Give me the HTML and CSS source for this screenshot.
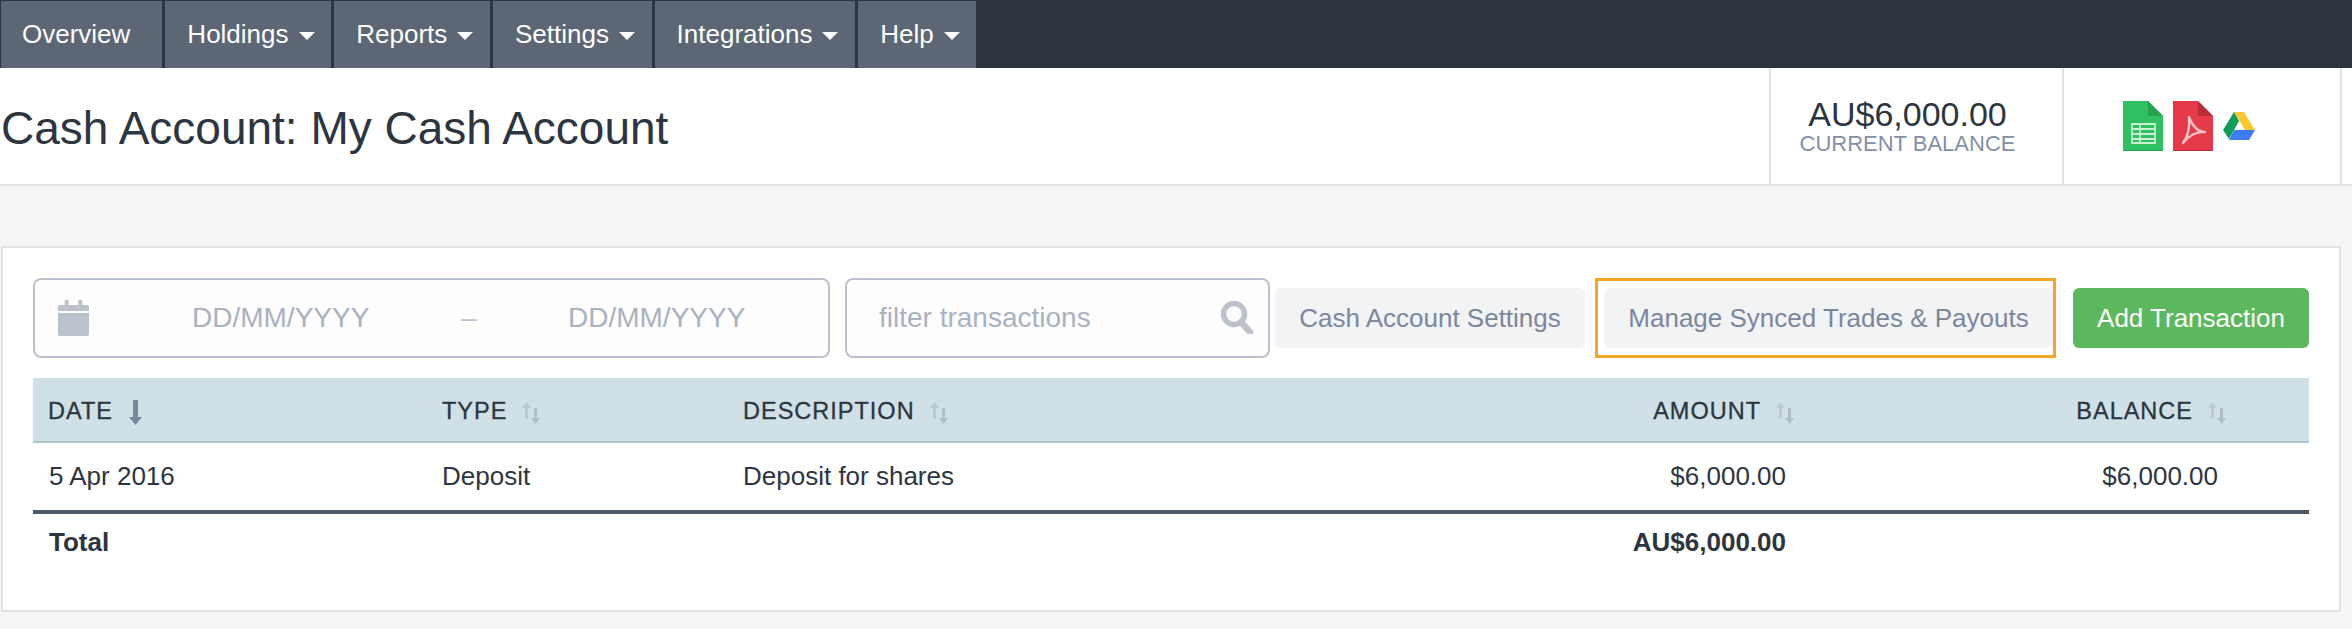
FILE: index.html
```html
<!DOCTYPE html>
<html lang="en">
<head>
<meta charset="utf-8">
<title>Cash Account</title>
<link rel="stylesheet" href="styles.css">
</head>
<body>
<nav class="nav">
  <a class="nav-item">Overview</a>
  <a class="nav-item">Holdings<i class="caret"></i></a>
  <a class="nav-item">Reports<i class="caret"></i></a>
  <a class="nav-item">Settings<i class="caret"></i></a>
  <a class="nav-item">Integrations<i class="caret"></i></a>
  <a class="nav-item">Help<i class="caret"></i></a>
</nav>
<header class="head">
  <h1 class="title">Cash Account: My Cash Account</h1>
  <div class="stat">
    <div class="stat-value">AU$6,000.00</div>
    <div class="stat-label">CURRENT BALANCE</div>
  </div>
  <div class="exports">
    <svg class="file" width="40" height="50" viewBox="0 0 40 50">
      <path d="M0 0H25L40 15V50H0Z" fill="#2fc061"/>
      <path d="M25 0L40 15H25Z" fill="#25a14f"/>
      <path d="M0 49H40V50H0Z" fill="#25a14f"/>
      <path d="M9 23H32V42H9ZM9 28H32M9 33H32M9 38H32M17 23V42" fill="none" stroke="#c8f0d5" stroke-width="1.8"/>
    </svg>
    <svg class="file" width="40" height="50" viewBox="0 0 40 50">
      <path d="M0 0H25L40 15V50H0Z" fill="#e63a4a"/>
      <path d="M25 0L40 15H25Z" fill="#b92c3a"/>
      <path d="M0 49H40V50H0Z" fill="#b92c3a"/>
      <path d="M16 16C17 25 15 35 10 42C15 35 24 30 32 31C26 31 20 26 16 16Z" fill="none" stroke="#f6c6cb" stroke-width="2.4" stroke-linejoin="round"/>
    </svg>
    <svg class="drive" width="32" height="28" viewBox="0 0 32 28">
      <path d="M11 0H21L32 18H22Z" fill="#fbc92f"/>
      <path d="M11 0L16 9L6 27L0 18Z" fill="#109d58"/>
      <path d="M11 18H32L26 28H6Z" fill="#3d7cf0"/>
    </svg>
  </div>
  <div class="head-end"></div>
</header>
<main class="panel">
  <div class="toolbar">
    <div class="field date-field">
      <svg class="cal" width="31" height="36" viewBox="0 0 32 36" preserveAspectRatio="none">
        <path d="M7 0H11V6H7ZM21 0H25V6H21Z" fill="#bcc2cd"/>
        <path d="M2 5H30A2 2 0 0 1 32 7V11H0V7A2 2 0 0 1 2 5ZM0 13H32V34A2 2 0 0 1 30 36H2A2 2 0 0 1 0 34Z" fill="#bcc2cd"/>
      </svg>
      <span class="date-text">DD/MM/YYYY</span>
      <span class="dash">–</span>
      <span class="date-text">DD/MM/YYYY</span>
    </div>
    <div class="field search-field">
      <span class="search-text">filter transactions</span>
      <svg class="search-icon" width="34" height="34" viewBox="0 0 34 34">
        <circle cx="14" cy="14" r="10.5" fill="none" stroke="#bcc2cd" stroke-width="5.5"/>
        <path d="M21 22L30 32" stroke="#bcc2cd" stroke-width="6.5" stroke-linecap="round"/>
      </svg>
    </div>
    <button class="btn btn-plain">Cash Account Settings</button>
    <div class="highlight"><button class="btn btn-plain">Manage Synced Trades &amp; Payouts</button></div>
    <button class="btn btn-add">Add Transaction</button>
  </div>
  <table class="ledger">
    <colgroup>
      <col class="c-date"><col class="c-type"><col class="c-desc"><col class="c-amt"><col class="c-bal">
    </colgroup>
    <thead>
      <tr>
        <th>DATE<svg class="sort-on" width="13" height="25" viewBox="0 0 13 25"><path d="M4 0H9V17H13L6.500 25L0 17H4Z" fill="#7b869a"/></svg></th>
        <th>TYPE<svg class="sort" width="18" height="22" viewBox="0 0 18 22"><path d="M4.500 0L9 6H6V16H3V6H0Z" fill="#bfc7d0"/><path d="M13.500 22L9 16H12V6H15V16H18Z" fill="#b4bcc8"/></svg></th>
        <th>DESCRIPTION<svg class="sort" width="18" height="22" viewBox="0 0 18 22"><path d="M4.500 0L9 6H6V16H3V6H0Z" fill="#bfc7d0"/><path d="M13.500 22L9 16H12V6H15V16H18Z" fill="#b4bcc8"/></svg></th>
        <th class="num">AMOUNT<svg class="sort" width="18" height="22" viewBox="0 0 18 22"><path d="M4.500 0L9 6H6V16H3V6H0Z" fill="#bfc7d0"/><path d="M13.500 22L9 16H12V6H15V16H18Z" fill="#b4bcc8"/></svg></th>
        <th class="num last">BALANCE<svg class="sort" width="18" height="22" viewBox="0 0 18 22"><path d="M4.500 0L9 6H6V16H3V6H0Z" fill="#bfc7d0"/><path d="M13.500 22L9 16H12V6H15V16H18Z" fill="#b4bcc8"/></svg></th>
      </tr>
    </thead>
    <tbody>
      <tr>
        <td>5 Apr 2016</td>
        <td>Deposit</td>
        <td>Deposit for shares</td>
        <td class="num">$6,000.00</td>
        <td class="num last">$6,000.00</td>
      </tr>
    </tbody>
    <tfoot>
      <tr>
        <td>Total</td>
        <td></td>
        <td></td>
        <td class="num">AU$6,000.00</td>
        <td class="last"></td>
      </tr>
    </tfoot>
  </table>
</main>
</body>
</html>
```
FILE: styles.css
```css
* { box-sizing: border-box; }
html, body { margin: 0; padding: 0; }
body {
  background: #f5f5f5;
  color: #2d3540;
  font-family: "Liberation Sans", Arial, sans-serif;
  font-size: 26px;
  height: 629px;
  overflow: hidden;
}
.nav {
  display: flex;
  gap: 3px;
  height: 68px;
  padding: 1px 0 0 1px;
  background: #2d3540;
}
.nav-item {
  display: flex;
  align-items: center;
  height: 67px;
  padding: 0 16.7px 0 22px;
  background: #5c6674;
  color: #fff;
  font-size: 26px;
}
.nav-item:first-child { padding: 0 32px 0 21px; }
.caret {
  width: 0;
  height: 0;
  margin-left: 10px;
  margin-top: 3px;
  border-left: 8px solid transparent;
  border-right: 8px solid transparent;
  border-top: 8px solid #fff;
}
.head {
  display: flex;
  height: 118px;
  background: #fff;
  border-bottom: 2px solid #dfe3e8;
}
.title {
  flex: 1;
  margin: 0;
  padding-left: 1px;
  font-size: 46px;
  font-weight: 400;
  line-height: 121px;
  white-space: nowrap;
}
.stat {
  width: 293px;
  border-left: 2px solid #dfe3e8;
  padding: 28px 18px 0 0;
  text-align: center;
}
.stat-value { font-size: 34px; line-height: 36px; }
.stat-label { font-size: 22px; line-height: 24px; color: #8390a5; }
.exports {
  display: flex;
  align-items: flex-start;
  width: 278px;
  border-left: 2px solid #dfe3e8;
  padding: 33px 0 0 59px;
  gap: 10px;
}
.drive { margin-top: 11px; }
.head-end { width: 12px; border-left: 2px solid #dfe3e8; }
.panel {
  width: 2340px;
  height: 366px;
  margin: 60px 0 0 1px;
  padding: 30px 30px 0;
  background: #fff;
  border: 2px solid #dfe3e8;
}
.toolbar {
  display: flex;
  align-items: center;
  height: 80px;
}
.field {
  display: flex;
  align-items: center;
  height: 80px;
  background: #fdfdfd;
  border: 2px solid #bcc2cd;
  border-radius: 8px;
  color: #a9b2c1;
  font-size: 28px;
}
.date-field {
  width: 797px;
  padding-left: 23px;
}
.cal { flex: none; margin-right: 103px; }
.date-text { width: 178px; white-space: nowrap; }
.dash { width: 198px; padding-left: 91px; color: #bcc2cd; }
.date-field .date-text:last-child { width: auto; }
.search-field {
  position: relative;
  width: 425px;
  margin-left: 15px;
  padding-left: 32px;
}
.search-icon { position: absolute; right: 14px; top: 20px; }
.btn {
  height: 60px;
  border: 0;
  border-radius: 6px;
  padding: 0;
  font-family: inherit;
  font-size: 26px;
  white-space: nowrap;
}
.btn-plain {
  background: #f1f3f5;
  color: #7b879c;
}
.toolbar > .btn-plain { width: 310px; margin-left: 5px; }
.highlight {
  display: flex;
  align-items: center;
  width: 461px;
  height: 80px;
  margin-left: 10px;
  padding-left: 6px;
  border: 3px solid #f5a623;
}
.highlight .btn-plain { width: 449px; }
.btn-add {
  width: 236px;
  margin-left: 17px;
  background: #5cb85c;
  color: #fff;
}
.ledger {
  width: 2276px;
  margin-top: 20px;
  border-collapse: separate;
  border-spacing: 0;
  table-layout: fixed;
}
.c-date { width: 393px; }
.c-type { width: 301px; }
.c-desc { width: 700px; }
.c-amt { width: 375px; }
.c-bal { width: 507px; }
.ledger th {
  height: 65px;
  padding: 4px 15px 0 16px;
  background: #cfe1e7;
  border-bottom: 2px solid #a8c9d2;
  font-size: 23.5px;
  font-weight: 400;
  letter-spacing: 1px;
  text-align: left;
  -webkit-text-stroke: 0.3px #2d3540;
  white-space: nowrap;
}
.ledger th:first-child { padding-left: 15px; }
.ledger th.num { padding-right: 8px; text-align: right; }
.ledger th.last { padding-right: 83px; }
.sort, .sort-on { vertical-align: middle; margin-left: 15px; }
.sort-on { margin-left: 16px; }
.ledger td {
  height: 67px;
  padding: 0 16px;
  font-size: 26px;
  white-space: nowrap;
}
.ledger tfoot td {
  height: 60px;
  font-weight: 700;
  border-top: 4px solid #4f5a68;
}
.ledger .num { text-align: right; }
.ledger td.last { padding-right: 91px; }
```
